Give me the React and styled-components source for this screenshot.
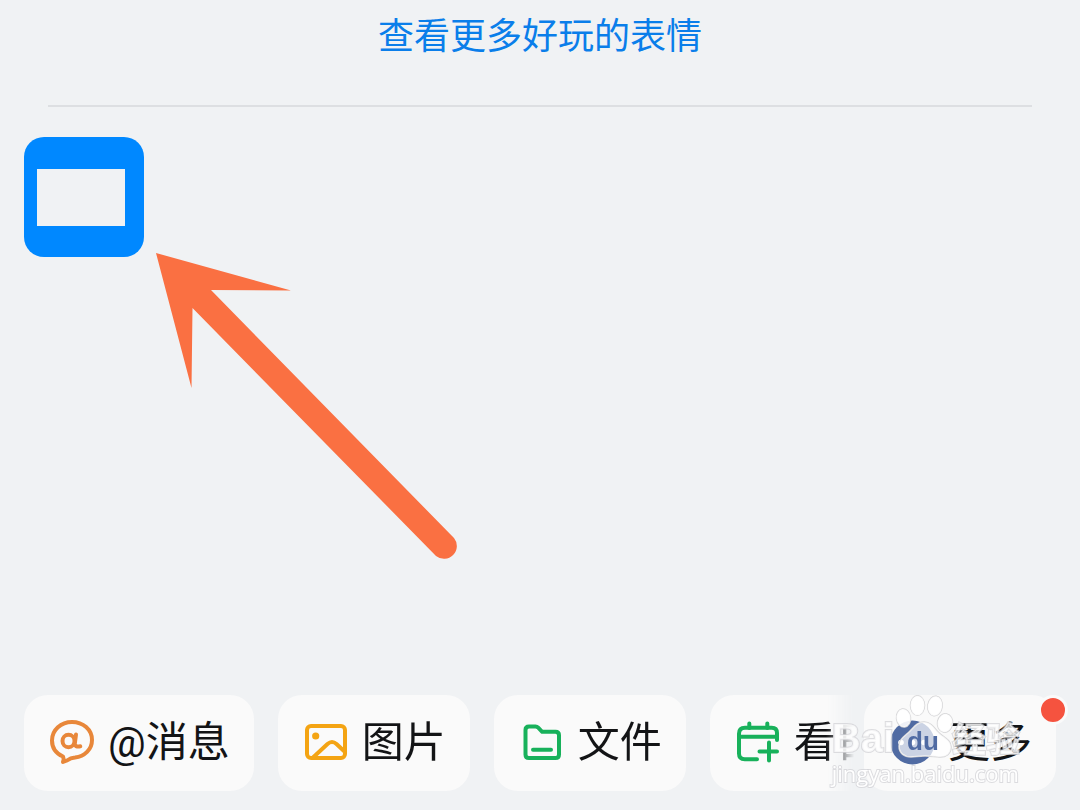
import React from 'react';
import styled, { createGlobalStyle } from 'styled-components';

const MessageIcon = () => (
  <Icon viewBox="0 0 48 48" $color="#e8873a" aria-hidden="true">
    <path d="M15 37.500C8 34.500 4 28.500 4 21.500C4 11 13 3 24 3s20 7.500 20 18c0 9.500-7.500 16.500-17 17.500c-4 .3-6 1.500-8 3l-4 1.500c1-2 1-3.500 0-5.500z" />
    <ellipse cx="20.500" cy="22" rx="6" ry="6.200" />
    <path d="M28 15.500l-1.200 9c-.3 2.500 2 3.500 5.500 2.800" />
  </Icon>
);

const PictureIcon = () => (
  <Icon viewBox="0 0 48 48" $color="#f4a413" aria-hidden="true">
    <rect x="5" y="7" width="38" height="32" rx="4" />
    <circle cx="13.700" cy="17" r="3.600" fill="#f4a413" stroke="none" />
    <path d="M11 38.500L25.500 25q4.500-4 9 0L43 33" />
  </Icon>
);

const FolderIcon = () => (
  <Icon viewBox="0 0 48 48" $color="#18b15b" aria-hidden="true">
    <path d="M11 7.500h6.500q1.500 0 2.700 1.200l4 4.100H37.500q3.500 0 3.500 3.500v19.200q0 3.500-3.500 3.500H11q-3.500 0-3.500-3.500V11q0-3.500 3.500-3.500z" />
    <path d="M15 30.700h18" />
  </Icon>
);

const CalendarIcon = () => (
  <Icon viewBox="0 0 48 48" $color="#18b15b" aria-hidden="true">
    <path d="M15.300 4.500V9M33.300 4.500V9" />
    <path d="M43 21V14q0-5.300-5.300-5.300H11Q5 8.700 5 14.700V34.500q0 5.800 5.800 5.800H23" />
    <path d="M5 17.700h38M25.500 32.400H43M35 23.400v18" />
  </Icon>
);

const MoreIcon = () => (
  <Icon viewBox="0 0 48 48" aria-hidden="true">
    <circle cx="24.500" cy="23.500" r="22" fill="#506ba3" stroke="none" />
    <g fill="#fff" stroke="none">
      <circle cx="13" cy="23.500" r="2.800" />
      <circle cx="24.500" cy="23.500" r="2.800" />
      <circle cx="36" cy="23.500" r="2.800" />
    </g>
  </Icon>
);

const actions = [
  { label: '@消息', icon: MessageIcon },
  { label: '图片', icon: PictureIcon },
  { label: '文件', icon: FolderIcon },
  { label: '看日程', icon: CalendarIcon },
];

const App = () => {
  return (
    <>
      <GlobalStyle />
      <Page>
        <Header>
          <MoreLink href="#stickers">查看更多好玩的表情</MoreLink>
        </Header>
        <Board id="stickers">
          <Sticker type="button" aria-label="表情">
            <StickerFrame />
          </Sticker>
          <Arrow viewBox="0 0 302 308" aria-hidden="true">
            <path d="M0 0L135 37.500L55 37L298 285A12.800 12.800 0 0 1 280 303L36.500 55L35.500 135Z" fill="#fa7042" />
          </Arrow>
        </Board>
        <Toolbar>
          <Strip>
            {actions.map(({ label, icon: ActionIcon }) => (
              <ActionButton type="button" key={label}>
                <ActionIcon />
                <span>{label}</span>
              </ActionButton>
            ))}
          </Strip>
          <ActionButton type="button">
            <MoreIcon />
            <span>更多</span>
            <Badge />
          </ActionButton>
        </Toolbar>
        <Watermark>
          <Brand>
            <span>Bai</span>
            <Paw viewBox="0 0 58 64" aria-hidden="true">
              <g fill="#fff" fillOpacity="0.9" stroke="#d4d4d6" strokeWidth="1.500">
                <ellipse cx="9.500" cy="23" rx="7" ry="9" transform="rotate(-8 9.500 23)" />
                <ellipse cx="23.500" cy="10.500" rx="7" ry="9.800" />
                <ellipse cx="41" cy="11" rx="7.200" ry="9.800" transform="rotate(8 41 11)" />
                <ellipse cx="51" cy="28" rx="7.500" ry="9.200" transform="rotate(10 51 28)" />
                <path
                  d="M30 27c6 0 9 4 13 9c5 6 14 8 14 16c0 7-5 10-11 10c-5 0-8-1-15-1s-9 1-14 1c-7 0-12-4-12-11c0-7 6-10 11-15c4-4 7-9 14-9z"
                  fillOpacity="0.7"
                />
              </g>
              <text x="13" y="55">du</text>
            </Paw>
            <BrandTail>经验</BrandTail>
          </Brand>
          <Site>jingyan.baidu.com</Site>
        </Watermark>
      </Page>
    </>
  );
};

export default App;

const GlobalStyle = createGlobalStyle`
  * {
    box-sizing: border-box;
  }
  body {
    margin: 0;
    background-color: #f0f2f4;
    font-family: 'Noto Sans CJK SC', sans-serif;
  }
`;

const Page = styled.div`
  position: relative;
  display: flex;
  flex-direction: column;
  min-height: 100vh;
  overflow: hidden;
`;

const Header = styled.header`
  display: flex;
  justify-content: center;
  margin: 0 48px;
  padding: 7px 0 46px;
  border-bottom: 2px solid #dddfe2;
`;

const MoreLink = styled.a`
  font-size: 36px;
  line-height: 52px;
  color: #0a7eea;
  text-decoration: none;
`;

const Board = styled.main`
  position: relative;
  flex: 1;
  padding: 30px 24px;
`;

const Sticker = styled.button`
  display: flex;
  width: 120px;
  height: 120px;
  padding: 32px 19px 31px 13px;
  border: none;
  border-radius: 20px;
  background-color: #0088ff;
`;

const StickerFrame = styled.span`
  flex: 1;
  align-self: stretch;
  background-color: #f0f2f4;
`;

const Arrow = styled.svg`
  position: absolute;
  top: 146px;
  left: 156px;
  width: 302px;
  height: 308px;
  pointer-events: none;
`;

const Toolbar = styled.nav`
  display: flex;
  gap: 10px;
  padding: 0 24px 19px;
`;

const Strip = styled.div`
  display: flex;
  flex: 1;
  gap: 24px;
  min-width: 0;
  overflow: hidden;
  mask-image: linear-gradient(to left, transparent, #000 28px);
`;

const ActionButton = styled.button`
  position: relative;
  display: flex;
  flex-shrink: 0;
  align-items: center;
  gap: 12px;
  height: 96px;
  padding: 0 24px;
  border: none;
  border-radius: 24px;
  background-color: #fafafa;
  color: #131416;
  font-family: Roboto, 'Noto Sans CJK SC', sans-serif;
  font-size: 42px;
  line-height: 60px;
  white-space: nowrap;
`;

const Icon = styled.svg`
  width: 48px;
  height: 48px;
  fill: none;
  stroke: ${({ $color }) => $color || 'none'};
  stroke-width: 4;
  stroke-linecap: round;
  stroke-linejoin: round;
`;

const Badge = styled.i`
  position: absolute;
  top: 0;
  right: -12px;
  width: 30px;
  height: 30px;
  border: 3px solid #fafafa;
  border-radius: 50%;
  background-color: #f5533f;
`;

const Watermark = styled.div`
  position: absolute;
  right: 60px;
  bottom: 23px;
  color: rgba(255, 255, 255, 0.75);
  pointer-events: none;
  -webkit-text-stroke: 2px rgba(210, 210, 213, 0.75);
  paint-order: stroke fill;
`;

const Brand = styled.div`
  display: flex;
  align-items: flex-end;
  font-family: 'Liberation Sans', sans-serif;
  font-size: 40px;
  font-weight: 700;
  line-height: 42px;
`;

const Paw = styled.svg`
  flex-shrink: 0;
  width: 58px;
  height: 64px;
  overflow: visible;
  text {
    fill: #506ba3;
    font-size: 26px;
    -webkit-text-stroke: 0;
  }
`;

const BrandTail = styled.span`
  font-family: 'Noto Sans CJK SC', sans-serif;
  font-size: 34px;
`;

const Site = styled.div`
  color: #fff;
  font-family: 'Open Sans', sans-serif;
  font-size: 22px;
  line-height: 28px;
`;
